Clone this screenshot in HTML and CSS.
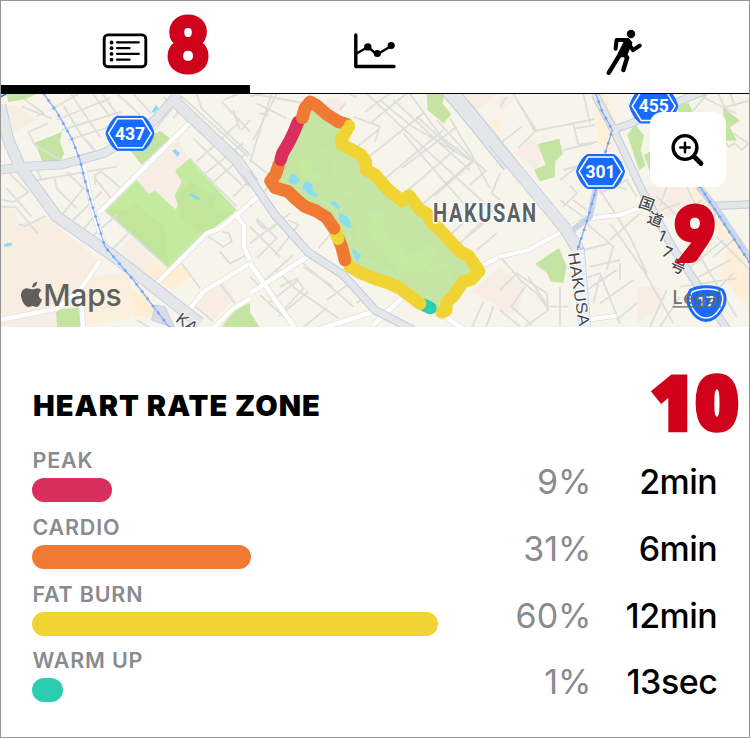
FILE: index.html
```html
<!DOCTYPE html>
<html lang="en">
<head>
<meta charset="utf-8">
<title>Workout details</title>
<link rel="stylesheet" href="styles.css">
</head>
<body>
<main class="screen">
  <nav class="tabs">
    <div class="tab active">
      <svg class="icon" width="48" height="40" viewBox="0 0 48 40" fill="none" stroke="#000">
        <rect x="3.2" y="4.9" width="41.6" height="31.8" rx="3.8" stroke-width="2.9"/>
        <g stroke-width="2.3" stroke-linecap="round"><path d="M16 12.3h21.8M16 18.1h12.5M16 23.8h21.8M16 29.7h12.5"/></g>
        <g fill="#000" stroke="none"><circle cx="10.5" cy="12.5" r="1.9"/><circle cx="10.5" cy="18.2" r="1.9"/><circle cx="10.5" cy="23.9" r="1.9"/><circle cx="10.5" cy="29.7" r="1.9"/></g>
      </svg>
      <span class="marker round marker-8">8</span>
    </div>
    <div class="tab">
      <svg class="icon" width="48" height="40" viewBox="0 0 48 40" fill="none" stroke="#000" stroke-linecap="round" stroke-linejoin="round">
        <path d="M4.8 3v31.5h38.2" stroke-width="3.4"/>
        <path d="M5.5 21.5 17 15l9 7.5 15-9" stroke-width="2.4"/>
        <g fill="#000" stroke="none"><circle cx="16.8" cy="14.9" r="3.7"/><circle cx="26.3" cy="21.5" r="3.6"/><circle cx="40.2" cy="13.5" r="3.6"/></g>
      </svg>
    </div>
    <div class="tab">
      <svg class="icon runner" width="48" height="50" viewBox="0 0 48 50" fill="none" stroke="#000" stroke-linecap="round" stroke-linejoin="round">
        <circle cx="31" cy="7" r="4.2" fill="#000" stroke="none"/>
        <path d="M15.6 21.8 16.6 13h9.9l6.5 10.2 6.8-4.6" stroke-width="4"/>
        <path d="M20 11.5h8.5l3.5 4-5.5 13.5-6.5 1-2-3 6-12z" fill="#000" stroke-width="1"/>
        <path d="m21.5 25-12.8 20.8M21 25.5l6.2 5-3.9 12.5" stroke-width="4.4"/>
      </svg>
    </div>
  </nav>

  <section class="map">
    <svg class="map-art" width="748" height="233" viewBox="1 94 748 233">
      <defs>
        <g id="shield">
          <path d="M-24 0c1-5 6-15 11-17h26c5 2 10 12 11 17-1 5-6 15-11 17h-26c-5-2-10-12-11-17z" fill="#166cff" stroke="#166cff"/>
          <path d="M-21.5 0-12.5-14.5h25L21.5 0l-9 14.5h-25z" fill="none" stroke="#fff" stroke-width="1.5"/>
        </g>
      </defs>
      <rect y="90" width="750" height="240" fill="#f7f4eb"/>

      <!-- west -->
      <g transform="translate(0 90) scale(.33333)">
        <path fill="#f7ede0" d="M0 45 50 45 110 90 45 125 0 105zM0 350 45 360 55 405 135 380 300 512 240 600 170 655 0 690z"/>
        <path fill="#f7ede4" d="M410 272 535 150 565 205 527 240 545 275 525 310 537 355 515 352 465 302 447 312zM360 480 395 440 463 510 430 550zM585 645 665 570 700 615 695 640 640 690zM0 690l170-34v70H0z"/>
        <path fill="#ffeed4" d="M465 510 505 535 545 520 572 562 520 600 430 550zM395 598 430 615 500 680 400 680 390 630z"/>
        <path fill="#f9efdc" d="M240 560l140-10 20 60-10 75-130 20z"/>
        <path fill="#c5e3a2" d="M20 12h90L75 28 25 36zM105 158 185 126 180 155 192 190 182 214 128 218zM390 180 480 122 510 145 425 225zM168 658l70-5 6 67h-72zM665 710l45-55 40-15v80z"/>
        <path fill="#c4eaa0" d="M315 362 410 270 447 312 465 302 525 357 537 345 524 315 545 275 525 242 568 206 710 360 620 430 505 533z"/>
        <path fill="#bee298" d="M525 318 575 272 610 300 650 315 640 360 700 370 620 430 590 420 545 390 535 355zM315 362l65-5 25-15 90 70 10 120z" opacity=".65"/>
        <g fill="none" stroke="#dcdfda" stroke-width="5.5">
          <path d="M205 0 245 60 300 140M270 0l60 80M300 0l90 130M400 12l55 60M350 10l70 65M150 60l85-48M170 90l160-65M185 120l180-55M205 150l125-40M70 25l60 45-20 8M65 50l90 35M145 100l-60 25 22 45M105 165l85 50M260 150l40 50M190 45l50 85 40 50"/>
          <path d="M0 328l40 8 45-30-55-55M0 350l48 2 65 78M20 295l75 85M55 403l20 5 60-30M70 250l25 20 30 0-20-45M115 270l235-40M165 265l5 30 60 60M200 245l50 50-60 75M285 265l60 75M285 285l0-30 20-10 75 65M220 390l85-85M245 425l70-85M270 445l80-70M335 480l55-55"/>
          <path d="M545 20l200 180M585 0l20 55 145 140M665 35l85 90M670 30l45-18M700 60l20 60M750 90l-25 30M580 145l145 140M590 215l125-115M610 255l120-95M635 280l110-95M700 320l50-50M490 20l30 30-55 70M550 45l-30 40M315 362 505 533M710 350 568 205"/>
          <path d="M545 520l55 75M625 440l45 30 25-15-8-25-20-5M660 485l30 35 60-30M660 580l45 60M430 550l80 60M580 645l60 50M410 690l50 30"/>
        </g>
        <path d="M240 600 300 512M0 690l170-34 70-56 10 120M295 370 575 92M250 225l30 140 35 105M465 585 620 430 660 415 750 340M560 670l50-65L750 520M635 720l60-60 55-35M708 375l23 30v65l19 40" fill="none" stroke="#dedfda" stroke-width="17"/>
        <path d="M240 600 300 512M0 690l170-34 70-56 10 120M295 370 575 92M250 225l30 140 35 105M465 585 620 430 660 415 750 340M560 670l50-65L750 520M635 720l60-60 55-35M708 375l23 30v65l19 40" fill="none" stroke="#fff" stroke-width="13"/>
        <path d="M0 240 70 230 185 224 310 190 400 140 465 90 535 10" fill="none" stroke="#c3cadb" stroke-width="28"/>
        <path d="M0 45 25 150 60 230 170 380 350 505 600 700M520 30 710 210 760 280" fill="none" stroke="#c3cadb" stroke-width="36"/>
        <path d="M0 240 70 230 185 224 310 190 400 140 465 90 535 10" fill="none" stroke="#e3e7ea" stroke-width="23"/>
        <path d="M0 45 25 150 60 230 170 380 350 505 600 700M520 30 710 210 760 280" fill="none" stroke="#e3e7ea" stroke-width="31"/>
        <path d="M465 645l30 5 30 65-70-25z" fill="#dadbea" stroke="#b8bdea" stroke-width="2"/>
        <path d="M0 22 20 10" stroke="#166cff" stroke-width="5"/>
        <path d="M130 10 170 65 215 145 240 210 265 310 315 470 400 570 510 715" fill="none" stroke="#8bb5ff" stroke-width="4"/>
        <path d="M130 10 170 65 215 145 240 210 265 310 315 470 400 570 510 715" fill="none" stroke="#76a7ff" stroke-width="9" stroke-linecap="round" stroke-dasharray="0 27"/>
        <g fill="#85dbf4"><path d="M455 65 468 45 476 55 462 68zM517 182 526 177 540 190 532 200zM569 316 573 309 600 323 595 332zM12 462 35 458 37 466 14 471z"/></g>
        <text class="road-name" transform="translate(524 693) rotate(36)" font-size="50">KA</text>
      </g>

      <!-- centre -->
      <g transform="translate(250 90) scale(.33333)">
        <path fill="#f7ede4" d="M225 30l45-6 10 40-50 20zM600 12h145l-80 60-50-15zM750 530 665 605 750 650z"/>
        <path fill="#ffefd8" d="M750 75l-45 38 45 40z"/>
        <path fill="#c5e3a2" d="M530 12h55l-8 28 27 33-23 27-48-40zM-5 660l40 60H-5z"/>
        <g fill="none" stroke="#dcdfda" stroke-width="5.5">
          <path d="M0 20l35-8M10 12l165 30M65 10 0 215M80 12 10 150M30 70l25 5M0 210l85 65M20 40l90 45"/>
          <path d="M300 12l20 10M350 10l120 115 250 230M390 30l90 75 180 105M480 12l95 130 90 70M310 80l80 30-15 45M345 65l75-55M360 100l110-90M270 60l15-20M310 180l80-65M345 210l175-140M400 270l180-150M455 235l160-120M475 300l150-130M520 340l150-130M550 320l125-110M430 30l150 140 80 70M500 80l110 100M560 90l100 110 45 40M600 85l60 100 60 110M710 240l-50 45M750 250l-25 60 25 20M620 470l130-130M640 450l110-90M590 445l80-75M680 480l60-50M460 130l50 60 130 150"/>
          <path d="M0 350l60-65M20 385l60 60-60 60M0 410l90 90M0 460l120-90M20 390c20 40 50 30 60 10M115 390l30 15-70 90M205 475l60-70M75 535l60 60 130 90M40 575l90-80M90 590l50-25 20 30-60 65M30 615l110 100M0 560l30 30M55 640l90-70M85 680l90-75M160 520l150 130M230 630l70-50M150 720l80-65M250 590l-90-60M320 640l30-30M280 540l35-30"/>
          <path d="M665 715l35-80M705 720l25-70"/>
        </g>
        <path d="M0 340 35 310M0 610 180 495M0 520l55 80 80 115M200 720l170-55M370 705 455 625M700 525l50-25M585 680l60 40" fill="none" stroke="#dddeda" stroke-width="18"/>
        <path d="M0 340 35 310M0 610 180 495M0 520l55 80 80 115M200 720l170-55M370 705 455 625M700 525l50-25M585 680l60 40" fill="none" stroke="#fff" stroke-width="14"/>
        <path d="M-10 250 75 375 175 487 280 555 375 660 490 720" fill="none" stroke="#c3cadb" stroke-width="26"/>
        <path d="M-10 250 75 375 175 487 280 555 375 660 490 720" fill="none" stroke="#e3e7ea" stroke-width="20"/>
        <path d="M580 -20 680 100 780 225" fill="none" stroke="#c3cadb" stroke-width="50"/>
        <path d="M580 -20 680 100 780 225" fill="none" stroke="#e3e7ea" stroke-width="44"/>
        <path fill="#c5e5a4" d="M180 50 265 95 275 165 345 210 348 240 455 332 510 360 687 543 610 620 585 665 510 640 380 568 300 530 264 445 225 385 115 305 70 272 92 207z"/>
        <g fill="#c4eaa2"><path d="M147 205l45 5-8 30 27 20-25 20-30-20zM357 365l55 5-15 40 80 80 60-10-60-55 90 60-50 60h-60l-40-35-60-75zM280 310l20-8 15 12-20 8z"/></g>
        <path d="M95 275c60-20 150 90 195 105s30 40 35 70M325 335c50 30 50 80 100 120s20 80 25 100M190 150l-35 30M200 170c90 50 40 80 50 95M520 560c60-60 90-50 80 70M320 500l110 50" fill="none" stroke="#c5eaa8" stroke-width="6"/>
        <g fill="#8adcf3"><path d="M120 255l12-3 18 18-14 15-20-8zM154 290l16-18 17 10 1 20 15 12-2 8-28-11zM237 338l18-5 14 16v12zM265 366l30 16 10 32-17-3-20-20zM304 473l30 23-14 20z"/></g>
        <g fill="none" stroke-width="38" stroke-linecap="round" stroke-linejoin="round">
          <path stroke="#f07a33" d="M265 95 290 103"/>
          <path stroke="#f0d433" d="M297 108 285 130 273 150 275 163 310 182 332 194 347 215 348 240 375 254 410 295 455 332 477 317 510 360 530 370 545 397 570 420 630 485 655 497 687 543 665 568 640 575 610 618 590 637 588 661 575 667"/>
          <path stroke="#2ccdb0" d="M522 645 541 654"/>
          <path stroke="#f0d433" d="M510 641 450 595 420 581 380 568 330 548 300 530"/>
          <path stroke="#f07a33" d="M285 510 275 470 265 445"/>
          <path stroke="#f0d433" d="M252 415 264 446"/>
          <path stroke="#f07a33" d="M252 415l-13-18-10-15-30-19-34-13-30-25-20-20-40-12-13-20 15-20 9-28M157 83l8-28 15-19 20 10 30 27 35 22"/>
          <path stroke="#da2f5c" d="M92 209l5-18 23-40 14-30 10-25"/>
          <path stroke="#f07a33" d="M157 83l8-28"/>
        </g>
      </g>

      <!-- east -->
      <g transform="translate(500 90) scale(.33333)">
        <path fill="#f7ede4" d="M0 20h50L0 70zM95 145l35 25-15 60 30 40-40-30-60-50zM0 530l75 60-20 75-55 10zM440 290h120l20 40-55 50-50 0zM410 590l70 0 10 60-80 50z"/>
        <path fill="#ffefd8" d="M280 12h40l40 120-40 70-25-50zM590 370l60-20 95 150v150l-80-90 20-100zM570 290l45-10 30 60-40 20z"/>
        <path fill="#c5e3a2" d="M113 162l65-16 10 45-22 23-2 48-45 12-17-35 35-15zM382 135l23-32 27 33-10 45 15 45-20 15zM432 195l18-10v60zM105 522l72-48 23 55-10 50-38-5-10-24zM530 50l35-12 15 30h-45zM670 52l50 40-30 20 20 40-40 0z"/>
        <g fill="none" stroke="#dcdfda" stroke-width="5.5">
          <path d="M40 12l70 110 175-35M45 20l60 105-50 50M220 100l15 65 60-10M225 115l60-10M250 10l20 90M0 160l65-50M0 50l20-30M190 180l90-20M190 240l90-25M180 270l65-50M190 350l40-40-20-25M180 330l70 50M220 330l40 30M320 240l50-25M300 310l80-40 30 50M310 270l70 30M300 300l90 140 50 110M260 400l80 70-20 70M330 400l100 140M420 370l-90 80M250 480l80-20M270 530l90-20M260 600l90-60M300 640l100-70M350 690l60-50M360 520v50M240 570l60-20 60 150M300 560l-20 80"/>
          <path d="M470 320l130 120M480 360l60-20M500 290l-20 60M560 290l60 120M545 380l60-50M590 430l70-70M640 500l60-50M600 500l110 180M650 440l100 100M560 540l110-90M580 570l110-60M640 610l60-60M540 590l170-25M500 600l-50 110M540 620l-60 90M430 540l90 160M700 130l45 30-20 20-20-20-20 10-15-25"/>
          <path d="M0 600l50-50 90 60M75 590l-40 60 60 55M0 660l60 50M140 610l5 50-70 50M60 570l50 40 35 50M85 560l60 90M0 500l70 80M180 590v120M145 650h60M590 12l120 60M620 12l-40 50M655 12l20 40 70-20M690 10l15 40"/>
        </g>
        <path d="M0 500 85 480 195 420 265 385 360 375 420 352M270 688l75-10" fill="none" stroke="#dddeda" stroke-width="16" stroke-linecap="round"/>
        <path d="M0 500 85 480 195 420 265 385 360 375 420 352M270 688l75-10" fill="none" stroke="#fff" stroke-width="12" stroke-linecap="round"/>
        <path d="M343 118 400 98 440 75 620 0M640 348l110-5M285 12l55 106 85 180 90 170 180 270" fill="none" stroke="#c3cadb" stroke-width="25"/>
        <path d="M343 118 400 98 440 75 620 0M640 348l110-5M285 12l55 106 85 180 90 170 180 270" fill="none" stroke="#e3e7ea" stroke-width="19"/>
        <path d="M205 430l65-50 18-90" fill="none" stroke="#cbd6e9" stroke-width="18"/>
        <path d="M-20 155 195 415 235 480 255 720" fill="none" stroke="#c3cadb" stroke-width="38"/>
        <path d="M-20 155 195 415 235 480" fill="none" stroke="#e3e7ea" stroke-width="33"/>
        <path d="M235 480 255 720" stroke="#edf0f3" stroke-width="34"/>
        <path d="M595 290l50 60 105 155" fill="none" stroke="#cbd6e9" stroke-width="20"/>
        <path d="M287 10l20 55 30 55-25 80-25 100-25 90-30 90M600 290l150 230" fill="none" stroke="#87b0f6" stroke-width="4"/>
        <path d="M287 10l20 55 30 55-25 80-25 100-25 90-30 90M600 290l150 230" fill="none" stroke="#75a5f8" stroke-width="9" stroke-linecap="round" stroke-dasharray="0 27"/>
        <text class="road-name" transform="translate(204 490) rotate(81.5)" font-size="48" textLength="222" lengthAdjust="spacingAndGlyphs">HAKUSA</text>
        <g class="road-name cjk" font-size="46" text-anchor="middle">
          <text transform="translate(440 341) rotate(20)" y="17">国</text>
          <text transform="translate(466 388) rotate(20)" y="17">道</text>
          <text transform="translate(486 437) rotate(24)" y="17">1</text>
          <text transform="translate(503 486) rotate(24)" y="17">7</text>
          <text transform="translate(534 529) rotate(24)" y="17">号</text>
        </g>
      </g>

      <text class="district" transform="translate(433 222.3) scale(.8 1)" textLength="129">HAKUSAN</text>
      <g class="shield-label">
        <use href="#shield" x="130" y="133.3"/><text x="130" y="139.6">437</text>
        <use href="#shield" x="600.5" y="171.5"/><text x="600.5" y="177.8">301</text>
        <use href="#shield" x="653.7" y="106"/><text x="653.7" y="112.3">455</text>
      </g>
      <path d="M690 290c8-5 25-5 33 0 8 12-5 31-17 31s-24-19-16-31z" fill="#166cff" stroke="#166cff" stroke-width="2"/>
      <path d="M692 292c8-4 22-4 29 0 6 11-5 26-15 26s-20-15-14-26z" fill="none" stroke="#fff" stroke-width="1.5"/>
      <text x="706" y="306.5" class="shield-label small">17</text>

      <g fill="#605f5a" transform="translate(-2.2 -16.2) scale(1.06)">
        <path d="M33.2 288.1c1.7 0 2.6-.8 4.1-.8 1.6 0 2.9.8 3.8 2.1-3.5 2.2-3.1 7 .7 8.5-.8 2.6-3 7-5.3 7-1.5 0-2-.9-3.8-.9s-2.4.9-3.8.9c-3.4 0-7-6.8-7-11.1 0-4.4 2.8-6.6 5.6-6.6 1.7 0 3.3.9 4.2.9z"/>
        <path d="M32.4 286.5c0-3 2-5 4.7-5.4.1 2.7-1.9 5.2-4.7 5.4z"/>
      </g>
      <text class="maps" x="43.2" y="305.5" textLength="78.5">Maps</text>
      <text class="legal" x="672.5" y="303.5" textLength="49">Legal</text>
      <path d="M672.5 306.8H721" stroke="#626565" stroke-width="1.3"/>
    </svg>
    <button class="zoom" aria-label="Zoom in">
      <svg width="36" height="36" viewBox="0 0 36 36" fill="none" stroke="#000" stroke-linecap="round">
        <circle cx="15" cy="15.5" r="11.9" stroke-width="3.4"/>
        <path d="m24 24.5 7 7" stroke-width="4.8"/>
        <path d="M15 10.8v9.4M10.3 15.5h9.4" stroke-width="2.5"/>
      </svg>
    </button>
    <span class="marker round marker-9">9</span>
  </section>

  <section class="zones">
    <header class="zones-head"><h1>HEART RATE ZONE</h1><span class="marker marker-10">10</span></header>
    <div class="zone"><div class="level"><span class="name">PEAK</span><div class="bar peak"></div></div><span class="percent">9%</span><span class="time">2min</span></div>
    <div class="zone"><div class="level"><span class="name">CARDIO</span><div class="bar cardio"></div></div><span class="percent">31%</span><span class="time">6min</span></div>
    <div class="zone"><div class="level"><span class="name">FAT BURN</span><div class="bar fat"></div></div><span class="percent">60%</span><span class="time">12min</span></div>
    <div class="zone"><div class="level"><span class="name">WARM UP</span><div class="bar warm"></div></div><span class="percent">1%</span><span class="time">13sec</span></div>
  </section>
</main>
</body>
</html>
```

FILE: styles.css
```css
* { box-sizing: border-box; }
body { margin: 0; background: #fff; font-family: Inter, "Liberation Sans", sans-serif; }
.screen { width: 750px; height: 738px; border: 1px solid #959595; overflow: hidden; }

.tabs { display: grid; grid-template-columns: repeat(3, 1fr); height: 93px; border-bottom: 1px solid #000; }
.tab { position: relative; display: flex; align-items: center; justify-content: center; padding-top: 8px; }
.tab.active { height: 93px; border-bottom: 9px solid #000; padding: 13px 2px 0 0; }
.icon { display: block; }

.marker { position: absolute; z-index: 2; font: 800 74px/80px "Open Sans", sans-serif; color: #d0021b; -webkit-text-stroke: 4.5px #d0021b; transform-origin: 0 0; transform: scaleX(1); }
.marker.round { font: 900 72px/80px Lato, "Open Sans", sans-serif; -webkit-text-stroke: 6px #d0021b; transform: scaleX(.96); }
.marker-8 { left: 167px; top: 2px; }
.marker-9 { left: 674px; top: 98px; }
.marker-10 { left: 650px; top: 35px; letter-spacing: 1px; }

.map { position: relative; height: 233px; }
.map-art { display: block; }
.road-name { font-family: "Liberation Sans", sans-serif; font-weight: 500; fill: #444749; stroke: #fff; stroke-width: 5px; paint-order: stroke; stroke-linejoin: round; }
.cjk { font-family: Inter, "Noto Sans CJK JP", sans-serif; font-weight: 500; }
.district { font: 700 25px Roboto, sans-serif; fill: #5d6264; stroke: #fff; stroke-width: 3px; paint-order: stroke; stroke-linejoin: round; }
.shield-label { font: 700 17.5px Roboto, sans-serif; fill: #fff; text-anchor: middle; }
.shield-label.small { font-size: 15px; }
.maps { font: 500 30px Inter, sans-serif; fill: #605f5a; }
.legal { font: 500 18px Inter, sans-serif; fill: #626565; opacity: .9; }
.zoom { position: absolute; left: 649px; top: 18px; width: 76px; height: 75px; display: flex; align-items: center; justify-content: center; padding: 0; border: 0; border-radius: 12px; background: #fff; }

.zones { position: relative; padding: 0 31px 0 31px; }
.zones-head { height: 120px; padding: 61px 0 0 1px; }
h1 { margin: 0; font-size: 29px; font-weight: 900; line-height: 36px; letter-spacing: 1.02px; white-space: nowrap; }
.zone { display: grid; grid-template-columns: 1fr 120px 128px; height: 66.75px; }
.name { display: block; height: 31px; line-height: 27px; font-size: 21.5px; font-weight: 600; letter-spacing: .8px; color: #8a8a8f; padding-left: .5px; }
.bar { height: 24px; border-radius: 12px; }
.peak { width: 79.5px; background: #da2f5c; }
.cardio { width: 219px; background: #f07a33; }
.fat { width: 406px; background: #f0d433; }
.warm { width: 31px; background: #2ccdb0; }
.percent, .time { padding-top: 14px; font-size: 34px; line-height: 42px; text-align: right; }
.percent { color: #8a8a8f; margin-right: -1.5px; }
.time { font-weight: 500; letter-spacing: -.5px; margin-right: .7px; }
```
